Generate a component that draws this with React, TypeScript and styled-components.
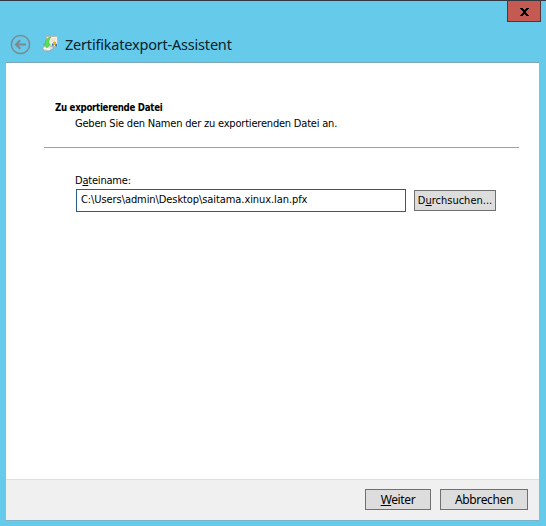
import React from "react";
import styled, { createGlobalStyle } from "styled-components";

const GlobalStyle = createGlobalStyle`
  *, *::before, *::after { box-sizing: border-box; }
  body { margin: 0; background: #66caea; }
`;

const Window = styled.div`
  width: 546px;
  height: 526px;
  display: flex;
  flex-direction: column;
  padding: 0 7px 5px 6px;
  background: #66caea;
  box-shadow: inset 0 1px 0 #303841;
  color: #000;
  font-family: "DejaVu Sans Condensed", "Noto Sans", sans-serif;
  font-size: 11px;
  line-height: 14px;
`;

const CaptionBar = styled.div`
  height: 22px;
  flex: none;
  display: flex;
  justify-content: flex-end;
`;

const CloseButton = styled.button`
  width: 34px;
  height: 22px;
  margin-right: -2px;
  padding: 1px 0 0 1px;
  display: flex;
  align-items: center;
  justify-content: center;
  background: #c45a51;
  border: 1px solid #57343a;
  border-top-color: #303841;
`;

const TitleRow = styled.header`
  height: 40px;
  flex: none;
  display: flex;
  align-items: center;
  padding: 4px 0 0 4px;
`;

const WizardIcon = styled.svg`
  margin: 0 6px 0 10px;
`;

const Title = styled.h1`
  margin: 0;
  font: 400 14.5px/20px "Noto Sans", "Open Sans", sans-serif;
  letter-spacing: -0.2px;
  color: #07222d;
  white-space: nowrap;
`;

const Panel = styled.main`
  flex: 1;
  display: flex;
  flex-direction: column;
  background: #fff;
  border-top: 1px solid #7ba5ba;
  border-bottom: 1px solid #79b4ca;
`;

const Page = styled.section`
  flex: 1;
  padding: 37px 20px 0 38px;
`;

const Label = styled.div<{ $indent: number; $heading?: boolean }>`
  height: 16px;
  line-height: 16px;
  padding-left: ${(p) => p.$indent}px;
  font-size: ${(p) => (p.$heading ? 9.6 : 11)}px;
  font-weight: ${(p) => (p.$heading ? 700 : 400)};
  letter-spacing: ${(p) => (p.$heading ? -0.27 : -0.2)}px;
  white-space: nowrap;
`;

const Rule = styled.hr`
  height: 1px;
  margin: 15px 0 25px;
  border: 0;
  background: #a0a0a0;
`;

const FileRow = styled.div`
  display: flex;
  align-items: center;
  gap: 8px;
  padding-left: 32px;
`;

const PathInput = styled.input`
  width: 330px;
  height: 23px;
  padding: 0 4px 3px;
  border: 1px solid #2a5c8a;
  border-radius: 0;
  outline: none;
  background: #fff;
  color: #000;
  font: inherit;
  letter-spacing: -0.08px;
`;

const Button = styled.button<{ $width: number; $system?: boolean }>`
  width: ${(p) => p.$width}px;
  height: 21px;
  padding: ${(p) => (p.$system ? "0" : "1px 0 0")};
  border: 1px solid #707070;
  border-radius: 0;
  background: #ddd;
  color: #000;
  font: ${(p) => (p.$system ? '12px/18px "Noto Sans", sans-serif' : "inherit")};
  letter-spacing: ${(p) => (p.$system ? "-0.35px" : "normal")};
  white-space: nowrap;
`;

const AccessKey = styled.span`
  text-decoration: underline;
  text-decoration-thickness: 1px;
  text-underline-offset: 1px;
  text-decoration-skip-ink: none;
`;

const Footer = styled.footer`
  height: 41px;
  flex: none;
  display: flex;
  justify-content: flex-end;
  gap: 9px;
  padding: 9px 11px 0 0;
  background: #f0f0f0;
  border-top: 1px solid #dfdfdf;
`;

export default function App() {
  return (
    <>
      <GlobalStyle />
      <Window>
        <CaptionBar>
          <CloseButton aria-label="Schließen">
            <svg width="9" height="8" viewBox="0 0 9 8" shapeRendering="crispEdges">
              <path d="M0 0h3v1h1v1h1v-1h1v-1h3v1h-1v1h-1v1h-1v2h1v1h1v1h1v1h-3v-1h-1v-1h-1v1h-1v1h-3v-1h1v-1h1v-1h1v-2h-1v-1h-1v-1h-1z" />
            </svg>
          </CloseButton>
        </CaptionBar>
        <TitleRow>
          <svg width="21" height="21" viewBox="0 0 21 21" fill="none" stroke="#7d8a90">
            <circle cx="10.5" cy="10.5" r="9.1" strokeWidth="1.5" />
            <path d="M16 10.5H6.5M10.2 6.2L6 10.5L10.2 14.8" strokeWidth="2.2" />
          </svg>
          <WizardIcon width="18" height="18" viewBox="0 0 18 18">
            <path d="M5.5 1.5h11v10h-11z" fill="#f3efe2" stroke="#b9b9ad" strokeWidth=".9" />
            <path d="M8 4h7M9 6h5" stroke="#dedbcf" />
            <path d="M11 8.5h2v2l-2 .5zM14 9h2v3l-2-1.5z" fill="#3276bb" />
            <circle cx="13.5" cy="8.3" r="1.8" fill="#eeab28" />
            <path d="M1 13l4-3 7 1.5.5 2L8 16H3l-.5-1.5z" fill="#d8dddd" stroke="#899a9e" strokeWidth=".6" />
            <path d="M3 13.2l6 1.2" stroke="#fff" strokeWidth="1.3" />
            <path d="M10 2C6.5 2.5 4 5 4.5 9H2.5L6 12.7 9.5 9H8C7.5 6 8 4 10 2z" fill="#5cde52" stroke="#39ae43" strokeWidth=".5" />
          </WizardIcon>
          <Title>Zertifikatexport-Assistent</Title>
        </TitleRow>
        <Panel>
          <Page>
            <Label $indent={11} $heading>Zu exportierende Datei</Label>
            <Label $indent={31}>Geben Sie den Namen der zu exportierenden Datei an.</Label>
            <Rule />
            <Label $indent={31}>D<AccessKey>a</AccessKey>teiname:</Label>
            <FileRow>
              <PathInput aria-label="Dateiname" defaultValue={"C:\\Users\\admin\\Desktop\\saitama.xinux.lan.pfx"} spellCheck={false} />
              <Button $width={82}>D<AccessKey>u</AccessKey>rchsuchen...</Button>
            </FileRow>
          </Page>
          <Footer>
            <Button $width={66} $system><AccessKey>W</AccessKey>eiter</Button>
            <Button $width={88} $system>Abbrechen</Button>
          </Footer>
        </Panel>
      </Window>
    </>
  );
}
